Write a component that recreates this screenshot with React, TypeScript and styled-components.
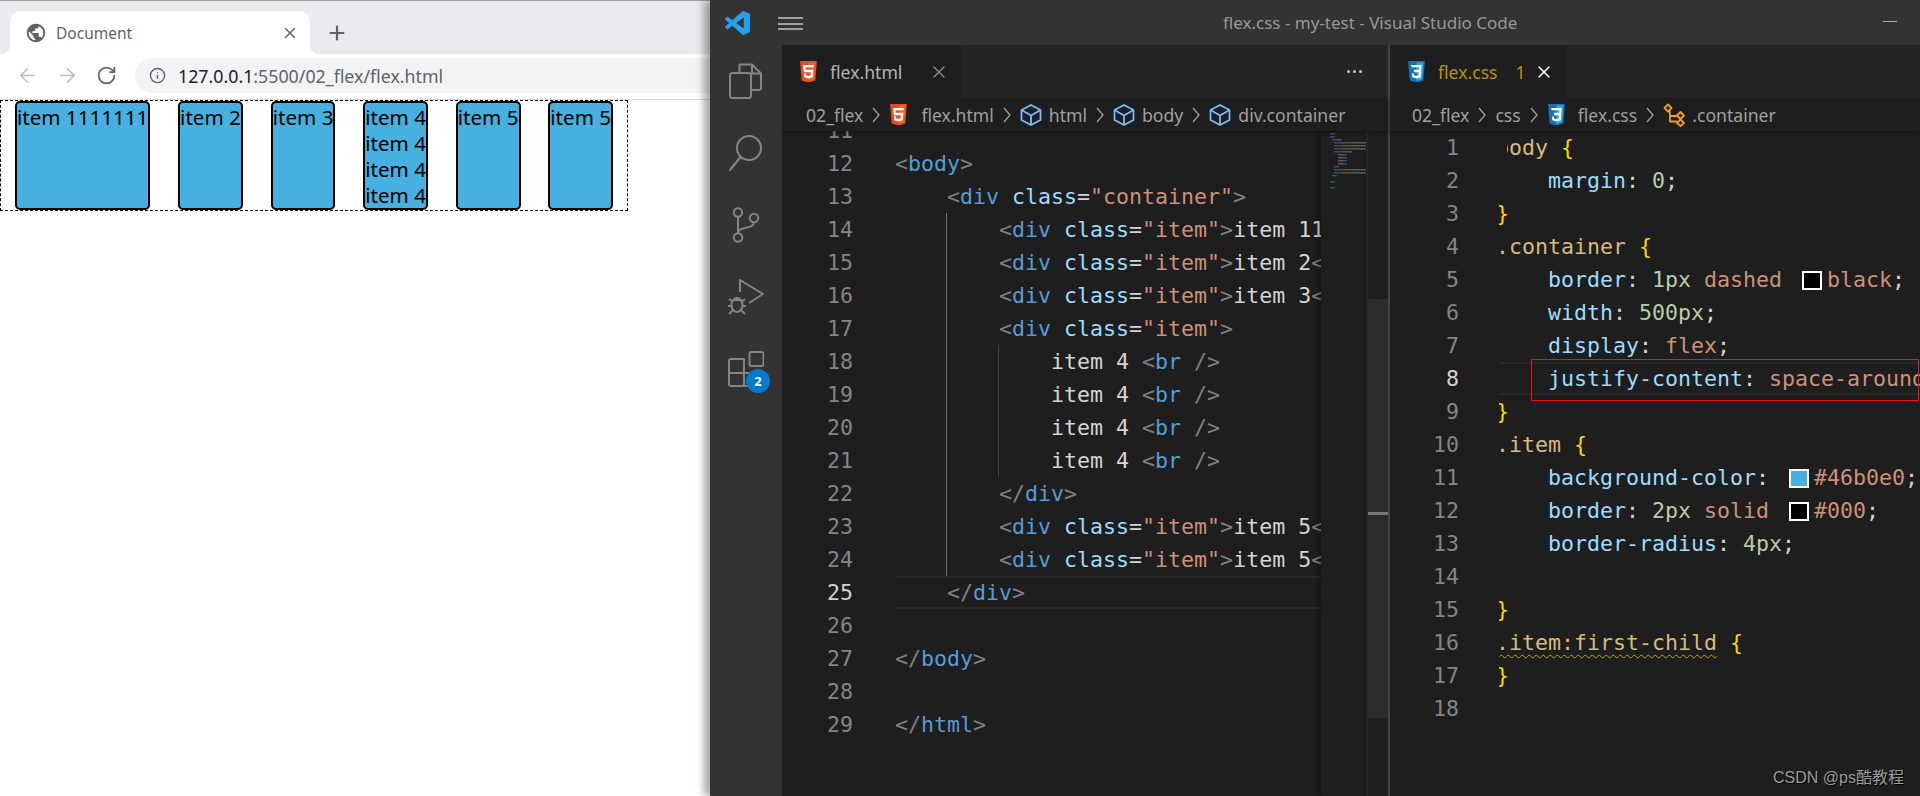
import React from 'react';
import styled, { createGlobalStyle } from 'styled-components';
import { ArrowLeft, ArrowRight, RotateCw, Info, X, Plus } from 'lucide-react';
import { MdPublic } from 'react-icons/md';

const GlobalStyle = createGlobalStyle`
  html, body {
    margin: 0;
    padding: 0;
    height: 796px;
    overflow: hidden;
    background: #1e1e1e;
  }
  * {
    box-sizing: border-box;
  }
`;

const UI_FONT = `"Noto Sans", "Noto Sans CJK SC", sans-serif`;
const MONO_FONT = `"DejaVu Sans Mono", "Liberation Mono", monospace`;
const CHAR = 13.05;

const Page = styled.div`
  display: grid;
  grid-template-columns: 710px 1210px;
  width: 1920px;
  height: 796px;
  overflow: hidden;
  position: relative;
  font-family: ${UI_FONT};
`;

/* ---------- browser ---------- */

const Browser = styled.div`
  display: flex;
  flex-direction: column;
  background: #fff;
`;

const TabStrip = styled.div`
  height: 54px;
  background: #e8eaed;
  border-top: 1px solid #9b9ea3;
  padding: 10px 0 0 10px;
  display: flex;
  align-items: flex-start;
`;

const BrowserTab = styled.div`
  position: relative;
  width: 300px;
  height: 43px;
  background: #fff;
  border-radius: 10px 10px 0 0;
  display: flex;
  align-items: center;
  padding-left: 15px;
  color: #5f6368;
  font-size: 15.5px;

  &::before,
  &::after {
    content: '';
    position: absolute;
    bottom: 0;
    width: 10px;
    height: 10px;
  }
  &::before {
    left: -10px;
    background: radial-gradient(circle at 0 0, transparent 10px, #fff 10.5px);
  }
  &::after {
    right: -10px;
    background: radial-gradient(circle at 100% 0, transparent 10px, #fff 10.5px);
  }
`;

const BrowserTabTitle = styled.span`
  margin-left: 9px;
  flex: 1;
`;

const TabClose = styled.span`
  display: flex;
  margin-right: 11px;
  color: #5f6368;
`;

const NewTab = styled.span`
  display: flex;
  margin: 11px 0 0 16px;
  color: #5f6368;
`;

const Toolbar = styled.div`
  height: 46px;
  border-bottom: 1px solid #dadce0;
  display: flex;
  align-items: center;
  padding: 0 0 2px 16px;
  background: #fff;
`;

const NavButton = styled.span<{ $off?: boolean }>`
  display: flex;
  width: 24px;
  margin-right: 16px;
  color: ${({ $off }) => ($off ? '#babcbe' : '#5f6368')};
`;

const UrlBar = styled.div`
  height: 35px;
  flex: 1;
  margin-left: -1px;
  background: #f1f3f4;
  border-radius: 18px 0 0 18px;
  display: flex;
  align-items: center;
  padding-left: 14px;
  color: #5f6368;
  font-size: 17.8px;
`;

const UrlHost = styled.span`
  margin-left: 12px;
  color: #202124;
`;

const PageBody = styled.div`
  flex: 1;
  background: #fff;
`;

const Container = styled.div`
  width: 628px;
  border: 1px dashed #000;
  display: flex;
  justify-content: space-around;
`;

const Item = styled.div`
  background: #46b0e0;
  border: 2.5px solid #000;
  border-radius: 5px;
  padding-top: 1px;
  font-size: 20.6px;
  line-height: 26px;
  color: #000;
`;

/* ---------- vs code chrome ---------- */

const Code = styled.div`
  display: flex;
  flex-direction: column;
  background: #1e1e1e;
  box-shadow: -6px 0 8px rgba(0, 0, 0, 0.35);
  position: relative;
  min-width: 0;
`;

const TitleBar = styled.div`
  height: 45px;
  background: #333;
  display: flex;
  align-items: center;
  padding-left: 15px;
  flex-shrink: 0;
`;

const Hamburger = styled.span`
  width: 25px;
  height: 13px;
  margin: 2px 0 0 28px;
  border-top: 2px solid #a0a0a0;
  border-bottom: 2px solid #a0a0a0;
  position: relative;

  &::after {
    content: '';
    position: absolute;
    left: 0;
    right: 0;
    top: 3.5px;
    height: 2px;
    background: #a0a0a0;
  }
`;

const WindowTitle = styled.span`
  margin-left: 420px;
  color: #999;
  font-size: 17px;
  flex: 1;
`;

const Minimize = styled.span`
  width: 14px;
  height: 1px;
  background: #aaa;
  margin: 0 23px 2px 0;
`;

const Workbench = styled.div`
  flex: 1;
  display: flex;
  min-height: 0;
`;

const ActivityBar = styled.div`
  width: 72px;
  background: #333;
  display: flex;
  flex-direction: column;
  flex-shrink: 0;
`;

const ActivityItem = styled.div`
  height: 72px;
  display: flex;
  align-items: center;
  justify-content: center;
  position: relative;
  color: #858585;
`;

const Badge = styled.span`
  position: absolute;
  left: 36px;
  top: 36px;
  width: 24px;
  height: 24px;
  border-radius: 50%;
  background: #007acc;
  color: #fff;
  font-size: 13px;
  font-weight: 700;
  display: flex;
  align-items: center;
  justify-content: center;
`;

const EditorGroup = styled.div<{ $width: number }>`
  width: ${({ $width }) => $width}px;
  display: flex;
  flex-direction: column;
  flex-shrink: 0;
  min-height: 0;
`;

const GroupDivider = styled.div`
  width: 2px;
  background: #444;
  flex-shrink: 0;
`;

const TabsBar = styled.div`
  height: 53px;
  background: #252526;
  display: flex;
  align-items: stretch;
  flex-shrink: 0;
`;

const EditorTab = styled.div<{ $width: number; $warn?: boolean }>`
  width: ${({ $width }) => $width}px;
  background: #1e1e1e;
  display: flex;
  align-items: center;
  padding-left: 17px;
  font-size: 17.6px;
  color: ${({ $warn }) => ($warn ? '#b89500' : '#b4b4b4')};
`;

const TabName = styled.span`
  margin-left: 12px;
`;

const TabBadge = styled.span`
  margin-left: 18px;
`;

const TabX = styled.span<{ $bright?: boolean; $gap: number }>`
  display: flex;
  margin-left: ${({ $gap }) => $gap}px;
  color: ${({ $bright }) => ($bright ? '#fff' : '#8a8a8a')};
`;

const MoreActions = styled.span`
  margin-left: auto;
  margin-right: 26px;
  align-self: center;
  display: flex;
  gap: 3px;

  i {
    width: 3px;
    height: 3px;
    border-radius: 50%;
    background: #c8c8c8;
  }
`;

const Breadcrumbs = styled.div<{ $left: number }>`
  height: 33px;
  flex-shrink: 0;
  display: flex;
  align-items: center;
  padding-left: ${({ $left }) => $left}px;
  background: #1e1e1e;
  color: #a0a0a0;
  font-size: 17.6px;
  white-space: nowrap;
  position: relative;
  z-index: 1;
  box-shadow: 0 2px 3px rgba(0, 0, 0, 0.3);
`;

const CrumbIcon = styled.span<{ $gap?: number }>`
  display: flex;
  margin-right: ${({ $gap }) => $gap ?? 7}px;
`;

const CrumbSep = styled.svg`
  width: 8px;
  height: 16px;
  margin: 0 9px;
  flex-shrink: 0;
`;

/* ---------- code ---------- */

const EditorBody = styled.div`
  flex: 1;
  display: flex;
  min-height: 0;
  position: relative;
`;

const CodePane = styled.div<{ $shift?: number }>`
  flex: 1;
  min-width: 0;
  overflow: hidden;
  margin-top: ${({ $shift }) => $shift ?? 0}px;
  font-family: ${MONO_FONT};
  font-size: 21.6px;
`;

const Row = styled.div`
  display: flex;
  height: 33px;
  line-height: 33px;
  white-space: pre;
`;

const LineNo = styled.span<{ $width: number; $gap: number; $active?: boolean }>`
  width: ${({ $width }) => $width}px;
  margin-right: ${({ $gap }) => $gap}px;
  text-align: right;
  flex-shrink: 0;
  color: ${({ $active }) => ($active ? '#d0d0d0' : '#858585')};
`;

const guideLayer = (level: number, colour: string) =>
  `linear-gradient(${colour}, ${colour}) ${level * CHAR * 4 - 1}px 0 / 1px 100% no-repeat`;

const CodeCell = styled.span<{ $guides?: string; $active?: boolean }>`
  flex: 1;
  min-width: 0;
  overflow: hidden;
  height: 33px;
  line-height: ${({ $active }) => ($active ? '29px' : '33px')};
  background: ${({ $guides }) => $guides ?? 'none'};
  border-top: ${({ $active }) => ($active ? '2px solid #282828' : 'none')};
  border-bottom: ${({ $active }) => ($active ? '2px solid #282828' : 'none')};
`;

const CodeText = styled.span<{ $shift?: number }>`
  display: inline-block;
  margin-left: ${({ $shift }) => $shift ?? 0}px;
`;

const TOKEN_COLOURS: Record<string, string> = {
  p: '#808080',
  tag: '#569cd6',
  attr: '#9cdcfe',
  str: '#ce9178',
  txt: '#d4d4d4',
  sel: '#d7ba7d',
  brace: '#ffd700',
  num: '#b5cea8',
};

const Tok = styled.span<{ $k: string; $squiggle?: boolean }>`
  color: ${({ $k }) => TOKEN_COLOURS[$k]};
  ${({ $squiggle }) =>
    $squiggle &&
    `text-decoration: underline wavy #c9a600 1px;
     text-underline-offset: 4px;
     text-decoration-skip-ink: none;`}
`;

// the editor is scrolled a few pixels sideways, so this glyph is nearly hidden
const ScrolledOff = styled.span`
  display: inline-block;
  color: ${TOKEN_COLOURS.sel};
  clip-path: inset(0 0 0 11px);
`;

const Swatch = styled.span<{ $colour: string; $lead: number }>`
  display: inline-block;
  width: 20px;
  height: 19px;
  margin: 0 5px 0 ${({ $lead }) => $lead}px;
  background: ${({ $colour }) => $colour};
  border: 2px solid #fff;
  vertical-align: -3px;
`;

const Minimap = styled.svg`
  width: 46px;
  flex-shrink: 0;
  height: 100%;
  display: block;
  box-shadow: -3px 0 5px rgba(0, 0, 0, 0.3);
  background: #1e1e1e;
  position: relative;
`;

const ScrollTrack = styled.div`
  width: 21px;
  flex-shrink: 0;
  position: relative;
  border-left: 1px solid #2a2a2a;
`;

const ScrollThumb = styled.div`
  margin-top: 168px;
  height: 419px;
  background: #2c2c2c;
`;

const ScrollMark = styled.div`
  position: absolute;
  left: 0;
  right: 0;
  top: 381px;
  height: 3px;
  background: #777;
`;

const RedBox = styled.div`
  position: absolute;
  left: 141px;
  right: 1px;
  top: 228px;
  height: 42px;
  border: 1px solid #e8141f;
  pointer-events: none;
`;

const HighlightCell = styled(CodeCell)`
  border-top: 2px solid #282828;
  border-bottom: 2px solid #282828;
  line-height: 29px;
`;

const Watermark = styled.div`
  position: absolute;
  right: 16px;
  bottom: 8px;
  color: #9c9c9c;
  font-family: "Liberation Sans", "Noto Sans CJK SC", sans-serif;
  font-size: 16px;
  text-shadow: 1px 1px 1px #000;
`;

/* ---------- drawn icons ---------- */

const Html5 = ({ size = 19 }: { size?: number }) => (
  <svg width={size} height={size * 1.14} viewBox="0 0 512 512" preserveAspectRatio="none">
    <path fill="#e44d26" d="M71 460 30 0h451l-41 460-185 52z" />
    <path fill="#f16529" d="M256 472l149-41 35-394H256z" />
    <path fill="#fff" d="M256 208h-75l-5-58h80V94H114l15 171h127zM256 355l-64-17-4-45h-56l8 89 116 32zM255 208v57h70l-7 73-63 17v59l116-32 15-174zM255 94v56h137l5-56z" />
  </svg>
);

const Css3 = ({ size = 19 }: { size?: number }) => (
  <svg width={size} height={size * 1.14} viewBox="0 0 512 512" preserveAspectRatio="none">
    <path fill="#1572b6" d="M71 460 30 0h451l-41 460-185 52z" />
    <path fill="#33a9dc" d="M256 472l149-41 35-394H256z" />
    <path fill="#fff" d="M256 208h75l5-58h-80V94h137l-1 15-13 156H256zM256 355l-64-17-4-45h-56l8 89 116 32zM318 265l-7 73-56 17v59l116-32 16-117zM256 94v56H122l-5-56zM256 208v57h-66l-5-57z" />
  </svg>
);

const Cube = () => (
  <svg width="22" height="24" viewBox="0 0 22 24" fill="none" stroke="#75beff" strokeWidth="1.8" strokeLinejoin="round">
    <path d="M11 2 20.5 7v10L11 22 1.5 17V7z" />
    <path d="M1.5 7 11 12.5 20.5 7M11 12.5V22" />
  </svg>
);

const SymbolClass = () => (
  <svg width="22" height="24" viewBox="0 0 22 24" fill="none" stroke="#ee9d28" strokeWidth="1.8" strokeLinejoin="round">
    <path d="M5 1.5 8.5 5 5 8.5 1.5 5z" />
    <path d="M17.5 9 21 12.5 17.5 16 14 12.5z" />
    <path d="M17.5 16.5 21 20 17.5 23 14 20z" />
    <path d="M6.5 7.5 7 13h7M7 13v5.5h7" />
  </svg>
);

const Sep = () => (
  <CrumbSep viewBox="0 0 8 16" fill="none" stroke="#a0a0a0" strokeWidth="1.3">
    <path d="M1 1l6 7-6 7" />
  </CrumbSep>
);

const VsLogo = () => (
  <svg width="25" height="24" viewBox="0 0 24 24" preserveAspectRatio="none">
    <path
      fill="#23a0ee"
      d="M23.15 2.587 18.21.21a1.494 1.494 0 0 0-1.705.29l-9.46 8.63-4.12-3.128a.999.999 0 0 0-1.276.057L.327 7.261A1 1 0 0 0 .326 8.74L3.899 12 .326 15.26a1 1 0 0 0 .001 1.479L1.65 17.94a.999.999 0 0 0 1.276.057l4.12-3.128 9.46 8.63a1.492 1.492 0 0 0 1.704.29l4.942-2.377A1.5 1.5 0 0 0 24 20.06V3.939a1.5 1.5 0 0 0-.85-1.352zm-5.146 14.861L10.826 12l7.178-5.448v10.896z"
    />
  </svg>
);

const ActIcon = ({ children }: { children: React.ReactNode }) => (
  <svg width="36" height="36" viewBox="0 0 36 36" fill="none" stroke="currentColor" strokeWidth="2" strokeLinejoin="round">
    {children}
  </svg>
);

/* ---------- content ---------- */

type Part = [string, string];

const tag = (name: string): Part[] => [['<', 'p'], [name, 'tag'], ['>', 'p']];
const closeTag = (name: string): Part[] => [['</', 'p'], [name, 'tag'], ['>', 'p']];
const itemOpen: Part[] = [['<', 'p'], ['div', 'tag'], [' ', 'txt'], ['class', 'attr'], ['=', 'txt'], ['"item"', 'str'], ['>', 'p']];
const itemLine = (text: string): Part[] => [['        ', 'txt'], ...itemOpen, [text, 'txt'], ...closeTag('div')];
const brLine: Part[] = [['            item 4 ', 'txt'], ['<', 'p'], ['br', 'tag'], [' />', 'p']];

interface HtmlRow {
  n: number;
  parts: Part[];
  guides?: number[];
}

const HTML_ROWS: HtmlRow[] = [
  { n: 11, parts: [] },
  { n: 12, parts: tag('body') },
  { n: 13, guides: [0], parts: [['    ', 'txt'], ['<', 'p'], ['div', 'tag'], [' ', 'txt'], ['class', 'attr'], ['=', 'txt'], ['"container"', 'str'], ['>', 'p']] },
  { n: 14, guides: [0, 1], parts: itemLine('item 1111111') },
  { n: 15, guides: [0, 1], parts: itemLine('item 2') },
  { n: 16, guides: [0, 1], parts: itemLine('item 3') },
  { n: 17, guides: [0, 1], parts: [['        ', 'txt'], ...itemOpen] },
  { n: 18, guides: [0, 1, 2], parts: brLine },
  { n: 19, guides: [0, 1, 2], parts: brLine },
  { n: 20, guides: [0, 1, 2], parts: brLine },
  { n: 21, guides: [0, 1, 2], parts: brLine },
  { n: 22, guides: [0, 1], parts: [['        ', 'txt'], ...closeTag('div')] },
  { n: 23, guides: [0, 1], parts: itemLine('item 5') },
  { n: 24, guides: [0, 1], parts: itemLine('item 5') },
  { n: 25, guides: [0], parts: [['    ', 'txt'], ...closeTag('div')] },
  { n: 26, guides: [0], parts: [] },
  { n: 27, parts: closeTag('body') },
  { n: 28, parts: [] },
  { n: 29, parts: closeTag('html') },
];

const guideBackground = (levels?: number[]) =>
  levels
    ? levels
        .map(l => guideLayer(l, l === 1 ? '#6e6e6e' : '#404040'))
        .join(', ')
    : undefined;

const decl = (prop: string, ...rest: Part[]): Part[] => [['    ', 'txt'], [prop, 'attr'], [': ', 'txt'], ...rest, [';', 'txt']];

const SWATCH = (colour: string, lead: number): Part => [`swatch:${colour}:${lead}`, 'swatch'];

const CSS_ROWS: Part[][] = [
  [['b', 'clipped'], ['ody', 'sel'], [' ', 'txt'], ['{', 'brace']],
  decl('margin', ['0', 'num']),
  [['}', 'brace']],
  [['.container', 'sel'], [' ', 'txt'], ['{', 'brace']],
  decl('border', ['1px', 'num'], [' ', 'txt'], ['dashed', 'str'], SWATCH('#000', 20), ['black', 'str']),
  decl('width', ['500px', 'num']),
  decl('display', ['flex', 'str']),
  decl('justify-content', ['space-around', 'str']),
  [['}', 'brace']],
  [['.item', 'sel'], [' ', 'txt'], ['{', 'brace']],
  decl('background-color', SWATCH('#46b0e0', 7), ['#46b0e0', 'str']),
  decl('border', ['2px', 'num'], [' ', 'txt'], ['solid', 'str'], SWATCH('#000', 20), ['#000', 'str']),
  decl('border-radius', ['4px', 'num']),
  [],
  [['}', 'brace']],
  [['.item:first-child', 'squiggle'], [' ', 'txt'], ['{', 'brace']],
  [['}', 'brace']],
  [],
];

const renderParts = (parts: Part[]) =>
  parts.map(([text, kind], i) => {
    if (kind === 'swatch') {
      const [, colour, lead] = text.split(':');
      return <Swatch key={i} $colour={colour} $lead={Number(lead)} />;
    }
    if (kind === 'clipped') {
      return <ScrolledOff key={i}>{text}</ScrolledOff>;
    }
    if (kind === 'squiggle') {
      return (
        <Tok key={i} $k="sel" $squiggle>
          {text}
        </Tok>
      );
    }
    return (
      <Tok key={i} $k={kind}>
        {text}
      </Tok>
    );
  });

// one tiny bar per source line: [start, length, colour]
const MINIMAP_BARS: [number, number, string][][] = [
  [[0, 5, '#569cd6']],
  [[0, 5, '#569cd6']],
  [[2, 4, '#569cd6'], [6, 6, '#ce9178']],
  [[4, 8, '#569cd6'], [12, 10, '#ce9178'], [22, 14, '#b5b5b5']],
  [[4, 8, '#569cd6'], [12, 10, '#ce9178'], [22, 14, '#b5b5b5']],
  [[4, 8, '#569cd6'], [12, 10, '#ce9178'], [22, 14, '#b5b5b5']],
  [[4, 8, '#569cd6'], [12, 10, '#ce9178']],
  [[8, 5, '#b5b5b5'], [13, 4, '#569cd6']],
  [[8, 5, '#b5b5b5'], [13, 4, '#569cd6']],
  [[8, 5, '#b5b5b5'], [13, 4, '#569cd6']],
  [[8, 5, '#b5b5b5'], [13, 4, '#569cd6']],
  [[4, 5, '#569cd6']],
  [[4, 8, '#569cd6'], [12, 10, '#ce9178'], [22, 14, '#b5b5b5']],
  [[4, 8, '#569cd6'], [12, 10, '#ce9178'], [22, 14, '#b5b5b5']],
  [[2, 5, '#569cd6']],
  [],
  [[0, 5, '#569cd6']],
  [],
  [[0, 5, '#569cd6']],
];

export default function App() {
  return (
    <Page>
      <GlobalStyle />
      <Browser>
        <TabStrip>
          <BrowserTab>
            <MdPublic size={22} />
            <BrowserTabTitle>Document</BrowserTabTitle>
            <TabClose>
              <X size={18} strokeWidth={2} />
            </TabClose>
          </BrowserTab>
          <NewTab>
            <Plus size={22} strokeWidth={2.4} />
          </NewTab>
        </TabStrip>
        <Toolbar>
          <NavButton $off>
            <ArrowLeft size={23} strokeWidth={1.7} />
          </NavButton>
          <NavButton $off>
            <ArrowRight size={23} strokeWidth={1.7} />
          </NavButton>
          <NavButton>
            <RotateCw size={21} strokeWidth={2} />
          </NavButton>
          <UrlBar>
            <Info size={17} strokeWidth={2} />
            <UrlHost>127.0.0.1</UrlHost>
            <span>:5500/02_flex/flex.html</span>
          </UrlBar>
        </Toolbar>
        <PageBody>
          <Container>
            <Item>item 1111111</Item>
            <Item>item 2</Item>
            <Item>item 3</Item>
            <Item>
              item 4<br />
              item 4<br />
              item 4<br />
              item 4
            </Item>
            <Item>item 5</Item>
            <Item>item 5</Item>
          </Container>
        </PageBody>
      </Browser>

      <Code>
        <TitleBar>
          <VsLogo />
          <Hamburger />
          <WindowTitle>flex.css - my-test - Visual Studio Code</WindowTitle>
          <Minimize />
        </TitleBar>
        <Workbench>
          <ActivityBar>
            <ActivityItem>
              <ActIcon>
                <path d="M11.5 10V1.5H24L33 10.5V25a2 2 0 0 1-2 2H23" />
                <path d="M24 1.5V10.5H33" />
                <rect x="2" y="10" width="21" height="25" rx="2.5" />
              </ActIcon>
            </ActivityItem>
            <ActivityItem>
              <ActIcon>
                <circle cx="21" cy="13" r="12" />
                <path d="M12.5 22 2 35" strokeLinecap="round" />
              </ActIcon>
            </ActivityItem>
            <ActivityItem>
              <ActIcon>
                <circle cx="10" cy="5.5" r="4.2" />
                <circle cx="26" cy="11" r="4.2" />
                <circle cx="10" cy="30.5" r="4.2" />
                <path d="M10 10v16" />
                <path d="M26 15.5c0 7-16 3.5-16 10.5" />
              </ActIcon>
            </ActivityItem>
            <ActivityItem>
              <ActIcon>
                <path d="M12 13V1L35 15 21 24" />
                <ellipse cx="9" cy="26" rx="5.5" ry="7" />
                <path d="M5 21h8M1 20l4 3M17 20l-4 3M0 27h3.5M18 27h-3.5M1 35l4-4M17 35l-4-4" />
              </ActIcon>
            </ActivityItem>
            <ActivityItem>
              <ActIcon>
                <rect x="21.5" y="1" width="14" height="14" rx="2" />
                <path d="M1 10a2 2 0 0 1 2-2h13v14h14v11a2 2 0 0 1-2 2H3a2 2 0 0 1-2-2zM1 22h15v13" />
              </ActIcon>
              <Badge>2</Badge>
            </ActivityItem>
          </ActivityBar>

          <EditorGroup $width={606}>
            <TabsBar>
              <EditorTab $width={179}>
                <Html5 />
                <TabName>flex.html</TabName>
                <TabX $gap={27}>
                  <X size={20} strokeWidth={1.6} />
                </TabX>
              </EditorTab>
              <MoreActions>
                <i />
                <i />
                <i />
              </MoreActions>
            </TabsBar>
            <Breadcrumbs $left={24}>
              <span>02_flex</span>
              <Sep />
              <CrumbIcon $gap={13}>
                <Html5 />
              </CrumbIcon>
              <span>flex.html</span>
              <Sep />
              <CrumbIcon>
                <Cube />
              </CrumbIcon>
              <span>html</span>
              <Sep />
              <CrumbIcon>
                <Cube />
              </CrumbIcon>
              <span>body</span>
              <Sep />
              <CrumbIcon>
                <Cube />
              </CrumbIcon>
              <span>div.container</span>
            </Breadcrumbs>
            <EditorBody>
              <CodePane $shift={-17.5}>
                {HTML_ROWS.map(row => (
                  <Row key={row.n}>
                    <LineNo $width={71} $gap={42} $active={row.n === 25}>
                      {row.n}
                    </LineNo>
                    <CodeCell $guides={guideBackground(row.guides)} $active={row.n === 25}>
                      {renderParts(row.parts)}
                    </CodeCell>
                  </Row>
                ))}
              </CodePane>
              <Minimap viewBox="0 0 46 665" preserveAspectRatio="xMinYMin slice">
                {MINIMAP_BARS.map((bars, y) =>
                  bars.map(([x, w, colour], i) => (
                    <rect key={`${y}-${i}`} x={9 + x} y={y * 3 + 2} width={w} height={1.5} fill={colour} opacity={0.4} />
                  ))
                )}
              </Minimap>
              <ScrollTrack>
                <ScrollThumb />
                <ScrollMark />
              </ScrollTrack>
            </EditorBody>
          </EditorGroup>

          <GroupDivider />

          <EditorGroup $width={530}>
            <TabsBar>
              <EditorTab $width={177} $warn>
                <Css3 />
                <TabName>flex.css</TabName>
                <TabBadge>1</TabBadge>
                <TabX $gap={8} $bright>
                  <X size={20} strokeWidth={1.8} />
                </TabX>
              </EditorTab>
            </TabsBar>
            <Breadcrumbs $left={22}>
              <span>02_flex</span>
              <Sep />
              <span>css</span>
              <Sep />
              <CrumbIcon $gap={12}>
                <Css3 />
              </CrumbIcon>
              <span>flex.css</span>
              <Sep />
              <CrumbIcon>
                <SymbolClass />
              </CrumbIcon>
              <span>.container</span>
            </Breadcrumbs>
            <EditorBody>
              <CodePane>
                {CSS_ROWS.map((parts, i) => {
                  const n = i + 1;
                  const Cell = n === 8 ? HighlightCell : CodeCell;
                  return (
                    <Row key={n}>
                      <LineNo $width={69} $gap={40} $active={n === 8}>
                        {n}
                      </LineNo>
                      <Cell>
                        <CodeText $shift={-3}>{renderParts(parts)}</CodeText>
                      </Cell>
                    </Row>
                  );
                })}
              </CodePane>
              <RedBox />
            </EditorBody>
          </EditorGroup>
        </Workbench>
        <Watermark>CSDN @ps酷教程</Watermark>
      </Code>
    </Page>
  );
}
